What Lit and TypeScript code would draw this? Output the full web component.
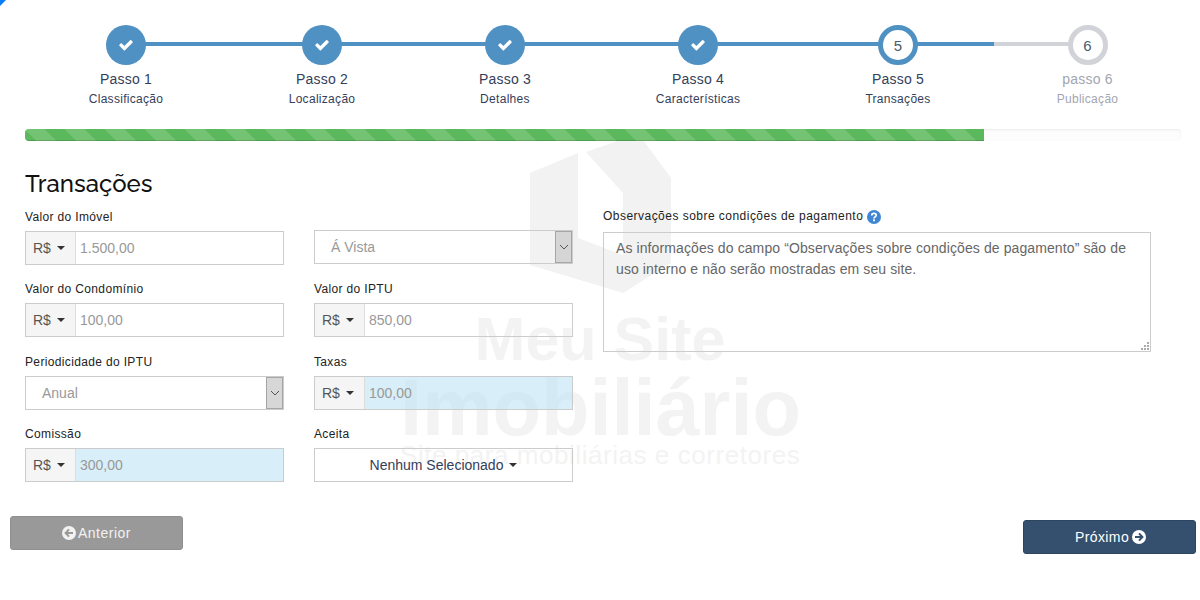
import { LitElement, html, css, svg } from "lit";
import { customElement } from "lit/decorators.js";

const STEPS = [
  { n: 1, title: "Passo 1", sub: "Classificação", width: 202, state: "done" },
  { n: 2, title: "Passo 2", sub: "Localização", width: 190, state: "done" },
  { n: 3, title: "Passo 3", sub: "Detalhes", width: 176, state: "done" },
  { n: 4, title: "Passo 4", sub: "Características", width: 210, state: "done" },
  { n: 5, title: "Passo 5", sub: "Transações", width: 190, state: "current" },
  { n: 6, title: "passo 6", sub: "Publicação", width: 189, state: "todo" },
];

const checkIcon = svg`<path fill="#fff" d="M1671 566q0 40-28 68l-724 724-136 136q-28 28-68 28t-68-28l-136-136-362-362q-28-28-28-68t28-68l136-136q28-28 68-28t68 28l294 295 656-657q28-28 68-28t68 28l136 136q28 28 28 68z"/>`;

@customElement("app-root")
export class AppRoot extends LitElement {
  static styles = css`
    :host {
      display: block;
      position: relative;
      height: 600px;
      overflow: hidden;
      background: #fff;
      font-family: "Liberation Sans", Arial, sans-serif;
      color: #333;
    }
    * { box-sizing: border-box; }
    .corner { position: absolute; left: 0; top: 0; width: 7px; height: 7px; z-index: 3; }
    .watermark {
      position: absolute;
      left: 400px;
      top: 138px;
      width: 400px;
      height: 340px;
      z-index: 0;
      color: #f3f3f3;
      text-align: center;
    }
    .house { position: absolute; left: 130px; top: 0; width: 145px; height: 160px; }
    .wm-a, .wm-b, .wm-c { position: absolute; left: 0; width: 400px; white-space: nowrap; }
    .wm-a { top: 166px; font-size: 61px; line-height: 70px; font-weight: 700; }
    .wm-b { top: 225px; font-size: 79.3px; line-height: 90px; font-weight: 700; }
    .wm-c { top: 300px; font-size: 26px; line-height: 34px; letter-spacing: 0.55px; }

    .page { position: relative; z-index: 1; padding-top: 25px; }
    .steps { display: flex; margin-left: 25px; }
    .step { position: relative; display: flex; flex-direction: column; align-items: center; }
    .step::before, .step::after {
      content: "";
      position: absolute;
      top: 17px;
      height: 4px;
      width: 50%;
      background: #5091c4;
    }
    .step::before { left: 0; }
    .step::after { right: 0; }
    .step:first-child::before, .step:last-child::after { display: none; }
    .step.current::after { right: -1px; }
    .step.todo::before { left: 1px; width: calc(50% - 1px); background: #d1d3d8; }
    .dot {
      position: relative;
      z-index: 1;
      width: 40px;
      height: 40px;
      border-radius: 50%;
      background: #5091c4;
      display: flex;
      align-items: center;
      justify-content: center;
      font-size: 15px;
      color: #4a5a6e;
    }
    .dot svg { width: 14px; height: 14px; }
    .current .dot { background: #fff; border: 5px solid #5091c4; }
    .todo .dot { background: #fff; border: 5px solid #d1d3d8; }
    .title { margin-top: 4px; font-size: 14px; line-height: 20px; letter-spacing: 0.2px; color: #34405a; }
    .sub { margin-top: 1px; font-size: 12px; line-height: 18px; letter-spacing: 0.3px; color: #34405a; }
    .todo .title, .todo .sub { color: #a2a6b0; }

    .progress {
      margin: 21px 19px 0 25px;
      height: 12px;
      border-radius: 4px;
      background: #fdfdfd;
      box-shadow: inset 0 1px 2px rgba(0, 0, 0, 0.08);
      overflow: hidden;
    }
    .bar {
      height: 100%;
      background-color: #5cb85c;
      background-image: linear-gradient(
        45deg,
        rgba(255,255,255,.15) 25%, transparent 25%, transparent 50%,
        rgba(255,255,255,.15) 50%, rgba(255,255,255,.15) 75%, transparent 75%
      );
      background-size: 40px 40px;
      box-shadow: inset 0 -1px 0 rgba(0, 0, 0, 0.15);
    }

    h2 {
      margin: 29px 0 10px 25px;
      font-family: Raleway, Inter, sans-serif;
      font-size: 24px;
      line-height: 28px;
      font-weight: 500;
      color: #111;
    }
    .form {
      display: grid;
      grid-template-columns: 259px 259px 548px;
      column-gap: 30px;
      margin-left: 25px;
    }
    .col { display: flex; flex-direction: column; gap: 15.33px; }
    label {
      display: flex;
      align-items: center;
      gap: 4px;
      height: 18px;
      padding-top: 1px;
      margin-bottom: 5px;
      font-size: 12px;
      line-height: 17px;
      letter-spacing: 0.35px;
      color: #222;
    }
    .group { height: 57px; }
    .input {
      display: flex;
      height: 34px;
      border: 1px solid #ccc;
      font-size: 14px;
      color: #999;
    }
    .addon {
      flex: none;
      display: flex;
      align-items: center;
      gap: 6px;
      width: 50px;
      padding-left: 7px;
      background: #f5f5f5;
      border-right: 1px solid #ddd;
      color: #555;
    }
    .caret {
      display: inline-block;
      width: 0;
      height: 0;
      border-top: 4px solid #333;
      border-left: 4px solid transparent;
      border-right: 4px solid transparent;
    }
    .value { flex: 1; display: flex; align-items: center; padding-left: 4px; }
    .value.info { background: rgba(190, 227, 243, 0.6); }
    .select .value { padding-left: 16px; }
    .select .arrow {
      flex: none;
      width: 17px;
      display: flex;
      align-items: center;
      justify-content: center;
      border: 1px solid #a6a6a6;
      background: rgba(208, 208, 208, 0.85);
    }
    .select .arrow svg { width: 10px; height: 6px; }
    .first-select { margin-top: 22px; }
    .multi {
      align-items: center;
      justify-content: center;
      gap: 6px;
      color: #34405a;
    }
    .obs { letter-spacing: 0.47px; height: 17px; padding-top: 0; margin-bottom: 7px; }
    .obs svg { flex: none; width: 14px; height: 14px; }
    .area { position: relative; width: 548px; height: 120px; }
    textarea {
      display: block;
      width: 100%;
      height: 100%;
      border: 1px solid #ccc;
      padding: 5px 12px;
      margin: 0;
      font: 14px/21px "Liberation Sans", Arial, sans-serif;
      letter-spacing: 0.1px;
      color: #666;
      background: transparent;
      outline: none;
      resize: none;
    }
    .grip { position: absolute; right: 2px; bottom: 2px; width: 8px; height: 8px; }
    .actions {
      display: flex;
      justify-content: space-between;
      align-items: flex-start;
      padding: 0 4px 0 10px;
      margin-top: 34px;
    }
    .btn {
      width: 173px;
      height: 34px;
      display: flex;
      align-items: center;
      justify-content: center;
      gap: 3px;
      border-radius: 3px;
      font-size: 14px;
      letter-spacing: 0.4px;
      color: #fff;
    }
    .btn svg { width: 14px; height: 14px; }
    .prev { gap: 2px; letter-spacing: 0.5px; background: #999; border: 1px solid #8f8f8f; color: #f2f2f2; }
    .next { padding-left: 2px; background: #34506e; border: 1px solid #2d4560; margin-top: 4px; }
  `;

  private money(value: string, info = false) {
    return html`<div class="input">
      <span class="addon">R$ <i class="caret"></i></span>
      <span class="value ${info ? "info" : ""}">${value}</span>
    </div>`;
  }

  private select(value: string) {
    return html`<div class="input select">
      <span class="value">${value}</span>
      <span class="arrow">
        <svg viewBox="0 0 10 6"><path d="M1 1l4 4 4-4" fill="none" stroke="#555" stroke-width="1"/></svg>
      </span>
    </div>`;
  }

  private step(s: (typeof STEPS)[number]) {
    return html`<div class="step ${s.state}" style="width:${s.width}px">
      <div class="dot">
        ${s.state === "done"
          ? html`<svg viewBox="100 250 1600 1300">${checkIcon}</svg>`
          : s.n}
      </div>
      <div class="title">${s.title}</div>
      <div class="sub">${s.sub}</div>
    </div>`;
  }

  render() {
    return html`
      <svg class="corner" viewBox="0 0 7 7"><path d="M0 0h6L0 6z" fill="#0b7cf5"/></svg>

      <div class="watermark">
        <svg class="house" viewBox="130 0 145 160">
          <path fill="#f2f2f2" d="M186 14l34-12h23l28 38v85l-48 30-93-28V35l48-20v85l45 17V55z"/>
        </svg>
        <div class="wm-a">Meu Site</div>
        <div class="wm-b">Imobiliário</div>
        <div class="wm-c">Site para mobiliárias e corretores</div>
      </div>

      <div class="page">
        <div class="steps">${STEPS.map((s) => this.step(s))}</div>
        <div class="progress"><div class="bar" style="width:${(959 / 1156) * 100}%"></div></div>
        <h2>Transações</h2>
        <div class="form">
          <div class="col">
            <div class="group"><label>Valor do Imóvel</label>${this.money("1.500,00")}</div>
            <div class="group"><label>Valor do Condomínio</label>${this.money("100,00")}</div>
            <div class="group"><label>Periodicidade do IPTU</label>${this.select("Anual")}</div>
            <div class="group"><label>Comissão</label>${this.money("300,00", true)}</div>
          </div>
          <div class="col">
            <div class="group"><div class="first-select">${this.select("Á Vista")}</div></div>
            <div class="group"><label>Valor do IPTU</label>${this.money("850,00")}</div>
            <div class="group"><label>Taxas</label>${this.money("100,00", true)}</div>
            <div class="group">
              <label>Aceita</label>
              <div class="input multi">Nenhum Selecionado <i class="caret"></i></div>
            </div>
          </div>
          <div>
            <label class="obs">Observações sobre condições de pagamento
              <svg viewBox="0 0 14 14">
                <circle cx="7" cy="7" r="7" fill="#3f87d2"/>
                <path d="M4.8 5.4c0-1.3 1-2 2.2-2s2.2.7 2.2 1.9c0 1.6-2.2 1.6-2.2 3.2" fill="none" stroke="#fff" stroke-width="1.7"/>
                <rect x="6" y="9.4" width="2" height="1.8" fill="#fff"/>
              </svg>
            </label>
            <div class="area">
              <textarea readonly>As informações do campo “Observações sobre condições de pagamento” são de uso interno e não serão mostradas em seu site.</textarea>
              <svg class="grip" viewBox="0 0 8 8">
                <path fill="#aaa" d="M6 0h2v2H6zM3 3h2v2H3zM6 3h2v2H6zM0 6h2v2H0zM3 6h2v2H3zM6 6h2v2H6z"/>
              </svg>
            </div>
          </div>
        </div>
        <div class="actions">
          <div class="btn prev">
            <svg viewBox="0 0 14 14"><circle cx="7" cy="7" r="7" fill="#f2f2f2"/><path d="M11 7H4M7 3.4L3.6 7 7 10.6" fill="none" stroke="#999" stroke-width="2"/></svg>
            Anterior
          </div>
          <div class="btn next">
            Próximo
            <svg viewBox="0 0 14 14"><circle cx="7" cy="7" r="7" fill="#fff"/><path d="M3 7h7M7 3.4L10.4 7 7 10.6" fill="none" stroke="#34506e" stroke-width="2"/></svg>
          </div>
        </div>
      </div>
    `;
  }
}
